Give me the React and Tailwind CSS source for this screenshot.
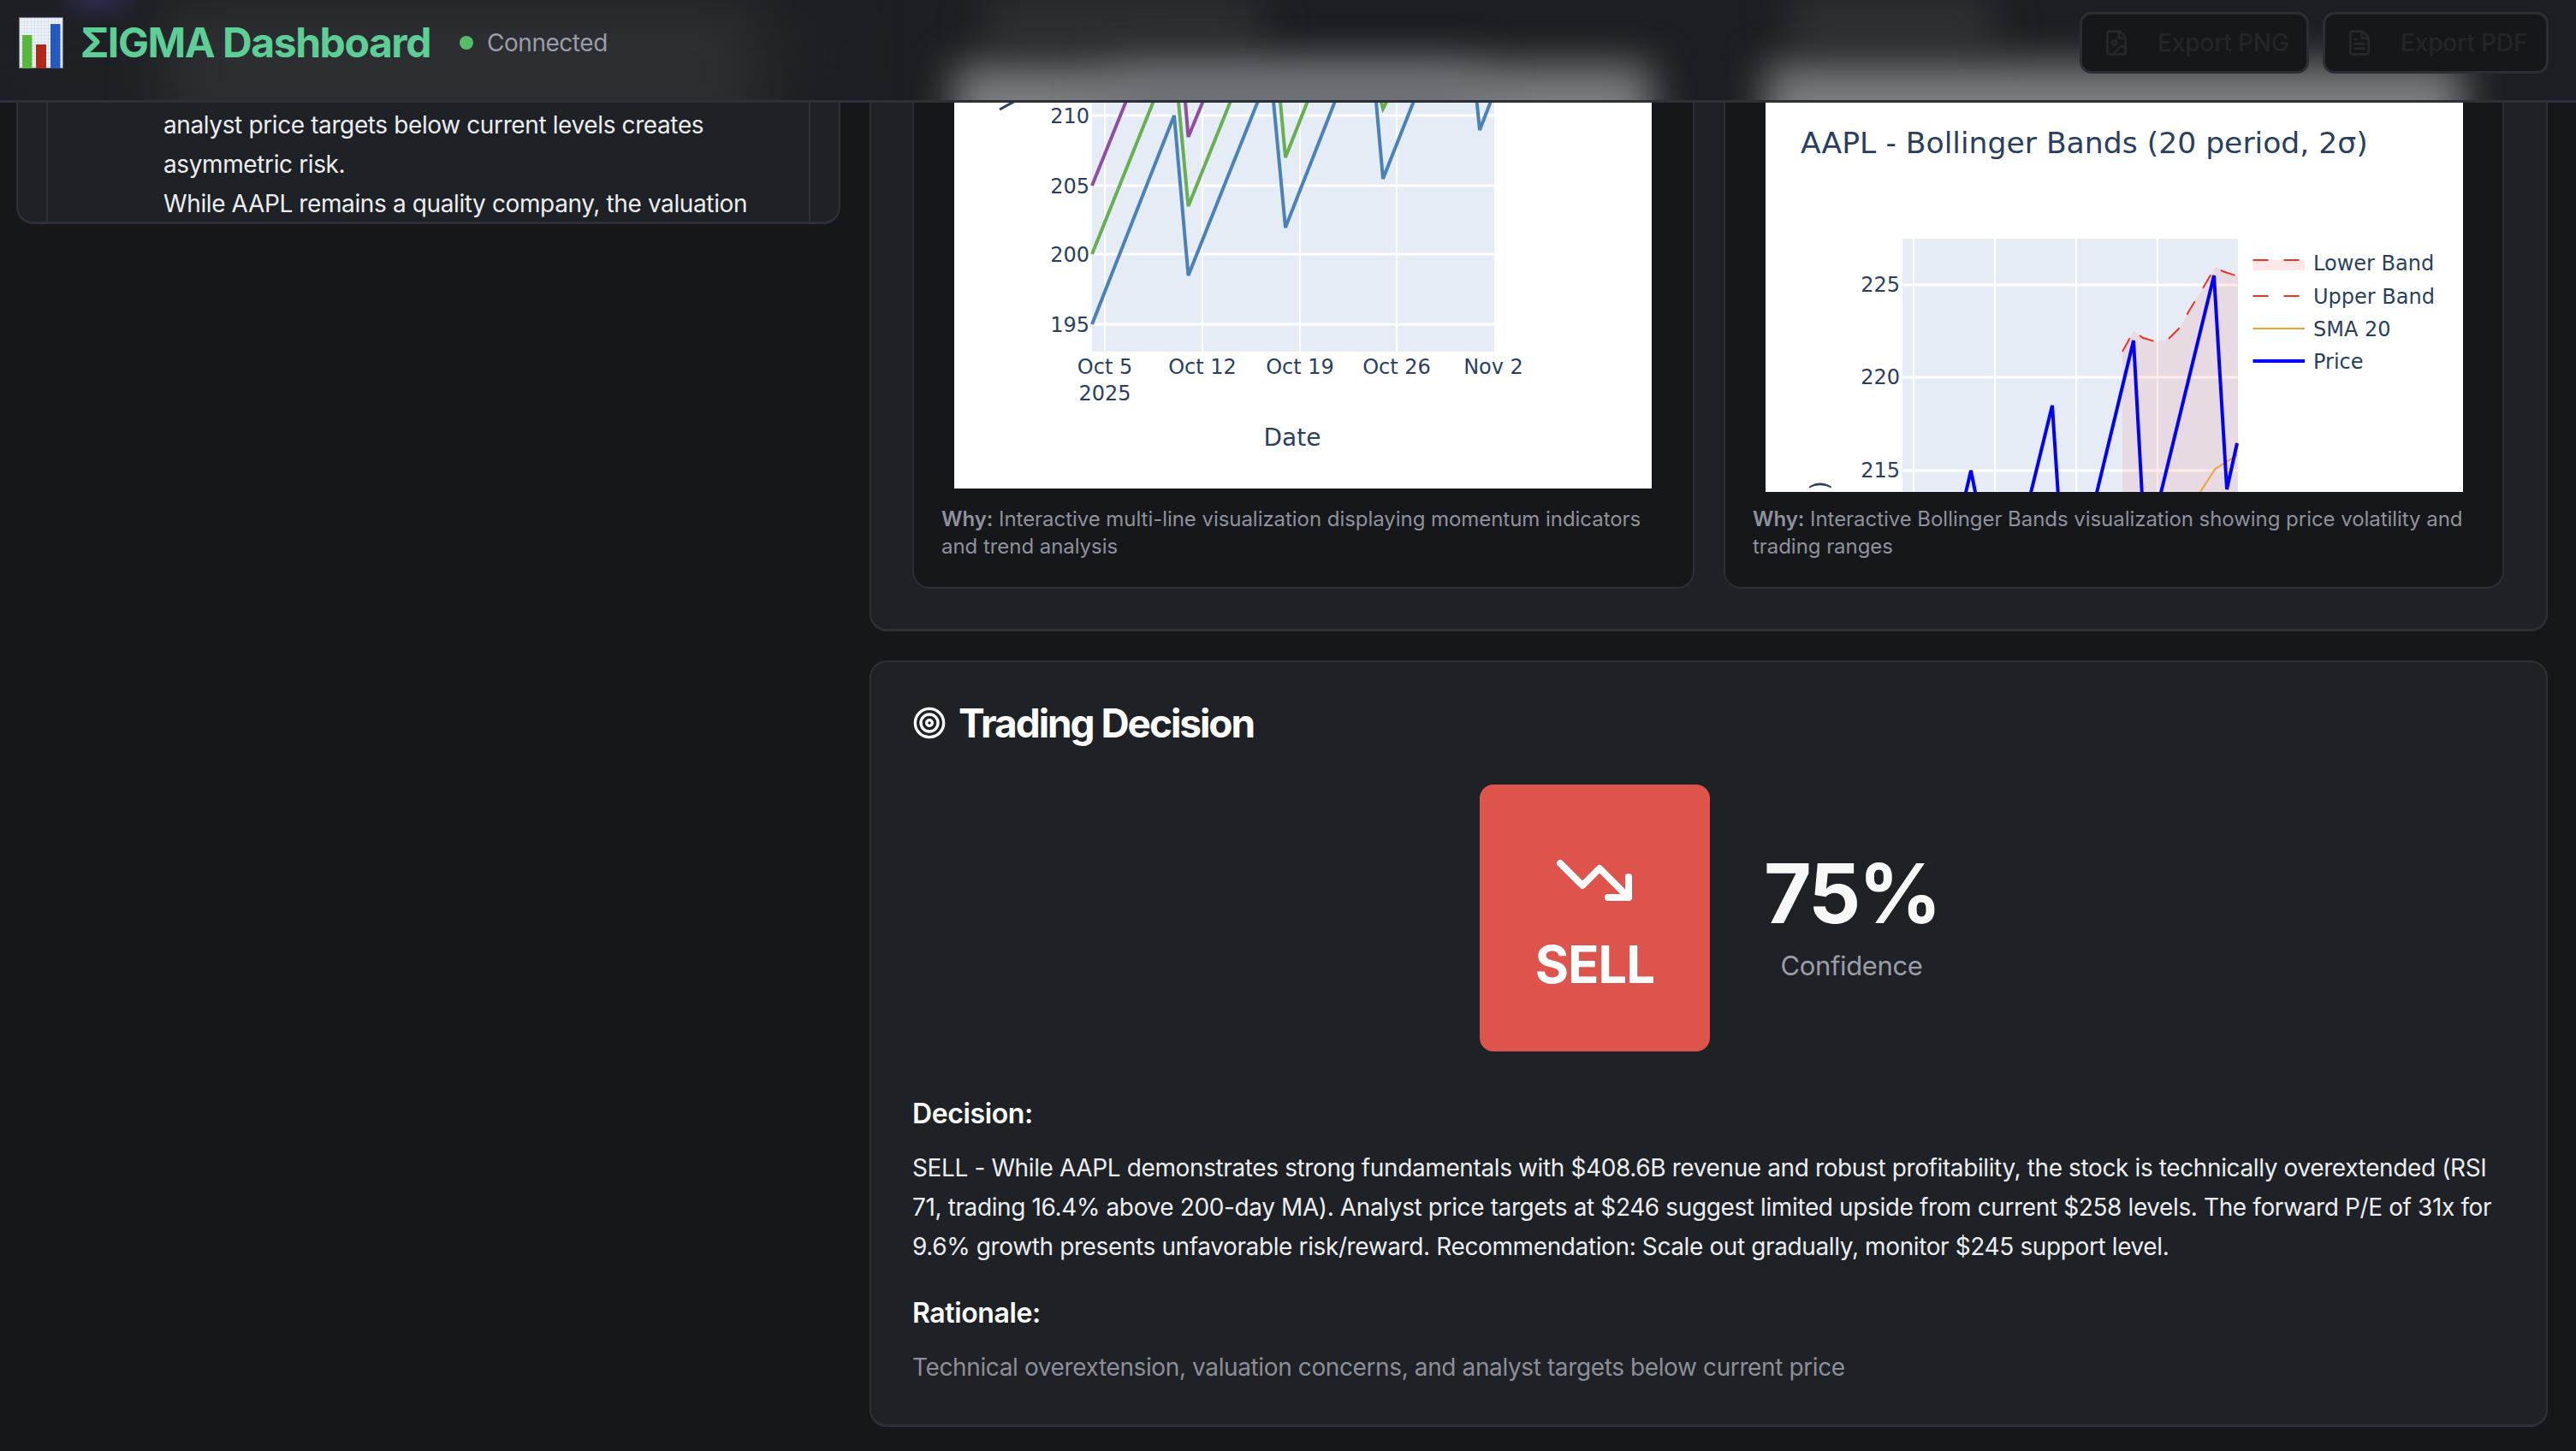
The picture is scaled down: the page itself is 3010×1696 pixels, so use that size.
import { FileImage, FileText, Target, TrendingDown } from "lucide-react";

const tickText = { fontFamily: "'DejaVu Sans', sans-serif", fontSize: 24, fill: "#2a3f5f", letterSpacing: 0 };

const MomentumChart = () => (
  <svg viewBox="1115 120 815 451" className="block h-[451px] w-[815px] bg-white">
    <rect x="1276" y="120" width="470" height="291" fill="#e5ecf6" />
    {[135, 217, 297, 379].map((y) => (
      <line key={y} x1="1276" x2="1746" y1={y} y2={y} stroke="#fff" strokeWidth="3" />
    ))}
    {[1291, 1405, 1519, 1632].map((x) => (
      <line key={x} x1={x} x2={x} y1="120" y2="411" stroke="#fff" strokeWidth="2" />
    ))}
    <g fill="none" strokeWidth="4" strokeLinejoin="miter">
      <polyline stroke="#8d4f9e" points="1276,217 1320,108" />
      <polyline stroke="#8d4f9e" points="1384,108 1388.5,160 1410,108" />
      <polyline stroke="#69ae52" points="1276,297 1352,108" />
      <polyline stroke="#69ae52" points="1376,108 1388.5,241 1442,108" />
      <polyline stroke="#69ae52" points="1495,108 1502,184 1532,108" />
      <polyline stroke="#69ae52" points="1611,108 1616,127 1626,108" />
      <polyline stroke="#4a81b8" points="1276,379 1372,135 1388.5,322 1474,108" />
      <polyline stroke="#4a81b8" points="1487,108 1502,266 1564,108" />
      <polyline stroke="#4a81b8" points="1607,108 1616,209 1656,108" />
      <polyline stroke="#4a81b8" points="1724.5,108 1729,152 1746,108" />
    </g>
    <line x1="1168" y1="128" x2="1190" y2="116" stroke="#2a3f5f" strokeWidth="3" />
    {[["210", 144], ["205", 226], ["200", 306], ["195", 388]].map(([t, y]) => (
      <text key={t} x="1273" y={y} textAnchor="end" style={tickText}>{t}</text>
    ))}
    {[["Oct 5", 1291], ["Oct 12", 1405], ["Oct 19", 1519], ["Oct 26", 1632], ["Nov 2", 1745]].map(([t, x]) => (
      <text key={t} x={x} y="437" textAnchor="middle" style={tickText}>{t}</text>
    ))}
    <text x="1291" y="468" textAnchor="middle" style={tickText}>2025</text>
    <text x="1510" y="521" textAnchor="middle" style={{ ...tickText, fontSize: 28 }}>Date</text>
  </svg>
);

const BollingerChart = () => (
  <svg viewBox="2063 120 815 455" className="block h-[455px] w-[815px] bg-white">
    <text x="2104" y="179" style={{ ...tickText, fontSize: 34.6 }}>AAPL - Bollinger Bands (20 period, 2σ)</text>
    <rect x="2223" y="279" width="392" height="300" fill="#e5ecf6" />
    {[333, 441, 550].map((y) => (
      <line key={y} x1="2223" x2="2615" y1={y} y2={y} stroke="#fff" strokeWidth="3" />
    ))}
    {[2236, 2331, 2426, 2521].map((x) => (
      <line key={x} x1={x} x2={x} y1="279" y2="580" stroke="#fff" strokeWidth="2" />
    ))}
    <polygon
      fill="#ff3b30"
      fillOpacity="0.1"
      points="2480,411 2493,387 2504,395 2518,399 2533,397 2548,382 2558,363 2574,337 2588.5,312 2597,317 2615,323 2615,580 2480,580"
    />
    <polyline
      fill="none"
      stroke="#ef3322"
      strokeWidth="2"
      strokeDasharray="18 18"
      points="2480,411 2493,387 2504,395 2518,399 2533,397 2548,382 2558,363 2574,337 2588.5,312 2597,317 2615,323"
    />
    <polyline fill="none" stroke="#f5a030" strokeWidth="2" points="2571,575 2588.5,548 2614,532" />
    <polyline fill="none" stroke="#0000ff" strokeWidth="4" points="2296,580 2303,550 2309,580" />
    <polyline fill="none" stroke="#0000ff" strokeWidth="4" points="2372,580 2398,474 2405,580" />
    <polyline fill="none" stroke="#0000ff" strokeWidth="4" points="2449,580 2493,398 2503,580" />
    <polyline fill="none" stroke="#0000ff" strokeWidth="4" points="2524,580 2587,322 2602,572 2614,518" />
    {[["225", 341], ["220", 449], ["215", 558]].map(([t, y]) => (
      <text key={t} x="2220" y={y} textAnchor="end" style={tickText}>{t}</text>
    ))}
    <text transform="translate(2136 562) rotate(-90)" textAnchor="end" style={{ ...tickText, fontSize: 28 }}>Price ($)</text>

    <rect x="2632.5" y="304" width="60.5" height="12" fill="#fde8e7" />
    <line x1="2632.5" x2="2693" y1="304" y2="304" stroke="#ef3322" strokeWidth="2" strokeDasharray="18 18" />
    <line x1="2632.5" x2="2693" y1="346" y2="346" stroke="#ef3322" strokeWidth="2" strokeDasharray="18 18" />
    <line x1="2632.5" x2="2693" y1="384" y2="384" stroke="#f5a030" strokeWidth="2" />
    <line x1="2632.5" x2="2693" y1="422" y2="422" stroke="#0000ff" strokeWidth="4" />
    {[["Lower Band", 316], ["Upper Band", 355], ["SMA 20", 393], ["Price", 431]].map(([t, y]) => (
      <text key={t} x="2703" y={y} style={tickText}>{t}</text>
    ))}
  </svg>
);

const ChartCard = ({ why, children }) => (
  <div className="h-[568px] rounded-b-[20px] border-x-2 border-b-2 border-[#2a2e36] bg-[#15171b] px-[32px]">
    <div className="mb-[16px] h-[455px] px-[15px]">{children}</div>
    <p className="text-[24px] leading-[32px] tracking-[-0.002em] text-[#8f929c]">
      <span className="font-semibold">Why:</span> {why}
    </p>
  </div>
);

const HeaderButton = ({ icon: Icon, label, className }) => (
  <button className={`flex h-[72px] items-center gap-[32px] rounded-[14px] border-[3px] border-[#2a2e36] bg-[#15171b] pl-[24px] text-[28px] font-medium tracking-[-0.005em] text-[#23252b] ${className}`}>
    <Icon size={32} strokeWidth={2} className="text-[#26282e]" />
    {label}
  </button>
);

const ChartEmoji = () => (
  <svg viewBox="22 19 52 60" className="h-[60px] w-[52px] shrink-0">
    <defs>
      <pattern id="emoji-grid" width="4" height="4" patternUnits="userSpaceOnUse">
        <rect width="4" height="4" fill="#eef2f7" />
        <path d="M0 0H4M0 0V4" stroke="#c6d5e6" strokeWidth="1" />
      </pattern>
    </defs>
    <rect x="22.5" y="19.5" width="51" height="59" fill="url(#emoji-grid)" stroke="#75797f" />
    <rect x="26" y="40" width="11.5" height="39" fill="#58b83c" />
    <rect x="42" y="51" width="12" height="28" fill="#b02818" />
    <rect x="59" y="27" width="11.5" height="52" fill="#2459c0" />
  </svg>
);

// what the frosted header lets through of the scrolled page
const HeaderBackdrop = () => (
  <div className="absolute inset-0 overflow-hidden" aria-hidden="true">
    <div className="absolute left-[0px] top-[0px] h-[130px] w-[985px] bg-[#1f2126] blur-[30px]" />
    <div className="absolute left-[195px] top-[0px] h-[170px] w-[690px] bg-[#2d2e32] blur-[32px]" />
    <div className="absolute left-[85px] top-[-30px] h-[36px] w-[60px] bg-[#34346a] blur-[16px]" />
    <div className="absolute left-[1150px] top-[4px] h-[42px] w-[325px] bg-[#35363a] blur-[24px]" />
    <div className="absolute left-[2090px] top-[2px] h-[46px] w-[240px] bg-[#35363a] blur-[24px]" />
    <div className="absolute left-[1115px] top-[76px] h-[110px] w-[815px] bg-[#7d7e81] blur-[24px]" />
    <div className="absolute left-[1300px] top-[90px] h-[60px] w-[430px] bg-[#6a6e74] blur-[30px]" />
    <div className="absolute left-[2063px] top-[76px] h-[110px] w-[815px] bg-[#7d7e81] blur-[24px]" />
  </div>
);

export default function App() {
  return (
    <div className="flex h-[1696px] w-[3010px] flex-col overflow-hidden bg-[#15171b] font-[Inter,sans-serif] tracking-[-0.024em]">
      <header className="relative flex h-[120px] shrink-0 items-center justify-between border-b-[3px] border-[#2c3038] bg-[#1c1e23] pb-[18px] pl-[22px] pr-[32px]">
        <HeaderBackdrop />
        <div className="relative flex items-center">
          <ChartEmoji />
          <h1 className="ml-[20px] text-[48px] font-bold leading-none tracking-[-0.03em] text-[#5dce96]">ΣIGMA Dashboard</h1>
          <div className="ml-[34px] h-[16px] w-[16px] rounded-full bg-[#57bb6a]" />
          <span className="ml-[16px] text-[28px] tracking-[-0.017em] text-[#9a9ca8]">Connected</span>
        </div>
        <div className="relative flex gap-[16px]">
          <HeaderButton icon={FileImage} label="Export PNG" className="w-[268px]" />
          <HeaderButton icon={FileText} label="Export PDF" className="w-[264px]" />
        </div>
      </header>

      {/* Page is scrolled: tops of the panels sit under the header */}
      <main className="grid grid-cols-[963px_1fr] items-start gap-[34px] pl-[19px] pr-[33px]">
        <section className="h-[142px] overflow-hidden rounded-b-[20px] border-x-2 border-b-[3px] border-[#2c3038] bg-[#1e2126] px-[33px]">
          <div className="h-full border-x-2 border-[#2c3038] pl-[135px] pr-[30px] pt-[3px] text-[28px] leading-[46px] text-[#eceef1]">
            <p>analyst price targets below current levels creates asymmetric risk.</p>
            <p>While AAPL remains a quality company, the valuation</p>
          </div>
        </section>

        <div className="flex flex-col gap-[34px]">
          <section className="h-[618px] rounded-b-[20px] border-x-2 border-b-[3px] border-[#2c3038] bg-[#1e2126] px-[48px]">
            <div className="grid grid-cols-[914px_912px] gap-[34px]">
              <ChartCard why="Interactive multi-line visualization displaying momentum indicators and trend analysis">
                <MomentumChart />
              </ChartCard>
              <ChartCard why="Interactive Bollinger Bands visualization showing price volatility and trading ranges">
                <BollingerChart />
              </ChartCard>
            </div>
          </section>

          <section className="h-[896px] rounded-[20px] border-2 border-b-[3px] border-[#2c3038] bg-[#1e2126] px-[48px] pt-[48px] text-white">
            <h2 className="flex h-[46px] items-center gap-[14px] text-[46px] font-bold tracking-[-0.045em]">
              <Target size={40} strokeWidth={2} />
              Trading Decision
            </h2>

            <div className="mb-[53px] mt-[49px] flex items-center justify-center gap-[63px] pl-[2px]">
              <div className="flex h-[312px] w-[269px] flex-col items-center rounded-[16px] bg-[#de544c] pt-[64px]">
                <TrendingDown size={96} strokeWidth={2} />
                <span className="mt-[14px] text-[60px] font-bold leading-[72px] tracking-[-0.017em]">SELL</span>
              </div>
              <div className="flex flex-col items-center pb-[4px]">
                <span className="text-[96px] font-bold leading-[108px] tracking-[-0.03em] text-[#f8f8f8]">75%</span>
                <span className="mt-[8px] text-[31px] leading-[46px] text-[#9a9ea8]">Confidence</span>
              </div>
            </div>

            <h3 className="mb-[20px] text-[32px] font-semibold leading-[40px]">Decision:</h3>
            <p className="text-[28px] leading-[46px] text-[#eceef1]">
              SELL - While AAPL demonstrates strong fundamentals with $408.6B revenue and robust profitability, the stock is technically overextended (RSI 71, trading 16.4% above 200-day MA). Analyst price targets at $246 suggest limited upside from current $258 levels. The forward P/E of 31x for 9.6% growth presents unfavorable risk/reward. Recommendation: Scale out gradually, monitor $245 support level.
            </p>
            <h3 className="mb-[20px] mt-[35px] text-[32px] font-semibold leading-[40px]">Rationale:</h3>
            <p className="text-[28px] leading-[46px] text-[#8b8f99]">
              Technical overextension, valuation concerns, and analyst targets below current price
            </p>
          </section>
        </div>
      </main>
    </div>
  );
}
